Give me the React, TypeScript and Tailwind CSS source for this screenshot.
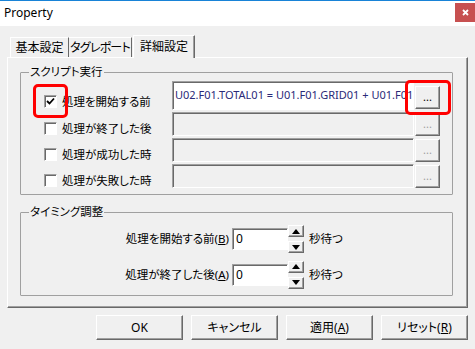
import React from "react";

const raised =
  "border border-t-white border-l-white border-r-[#696969] border-b-[#696969] shadow-[inset_-1px_-1px_0_#a0a0a0]";
const sunken =
  "border border-t-[#a0a0a0] border-l-[#a0a0a0] border-r-white border-b-white shadow-[inset_1px_1px_0_#696969]";

const CheckBox = ({ checked }: { checked?: boolean }) => (
  <div className={`shrink-0 w-[13px] h-[13px] bg-white flex items-center justify-center ${sunken}`}>
    {checked && (
      <svg width="9" height="9" viewBox="0 0 9 9">
        <path d="M1 4 L3.5 6.5 L8 1.5" stroke="#000" strokeWidth="1.8" fill="none" />
      </svg>
    )}
  </div>
);

const DotButton = ({ enabled }: { enabled?: boolean }) => (
  <div
    className={`w-[25px] h-[23px] bg-[#f0f0f0] flex items-center justify-center text-[11px] leading-none pb-[2px] ${raised} ${
      enabled ? "text-black" : "text-[#a0a0a0]"
    }`}
  >
    ...
  </div>
);

const ScriptRow = ({
  label,
  checked,
  value,
  first,
}: {
  label: string;
  checked?: boolean;
  value?: string;
  first?: boolean;
}) => (
  <div className={`flex items-start ${first ? "h-[31px]" : "h-[26px]"}`}>
    <div className={`shrink-0 w-[151px] pl-[23px] flex items-center ${first ? "mt-[14px]" : "mt-[10px]"}`}>
      <CheckBox checked={checked} />
      <span className="ml-[5px] text-[11.5px] leading-[13px] whitespace-nowrap">{label}</span>
    </div>
    <div
      className={`shrink-0 w-[242px] overflow-hidden whitespace-nowrap flex items-center pl-[2px] text-[11px] ${sunken} ${
        first ? "h-[29px] bg-white text-[#2a2a78]" : "h-[24px] bg-[#f0f0f0]"
      } font-['Noto_Sans',sans-serif]`}
    >
      {value}
    </div>
    <div className={`shrink-0 ml-[1px] ${first ? "mt-[5px]" : "mt-[1px]"}`}>
      <DotButton enabled={first} />
    </div>
  </div>
);

const Spinner = () => (
  <div className="w-[16px] h-[28px] flex flex-col justify-between">
    <div className={`h-[12px] bg-[#f0f0f0] flex items-center justify-center ${raised}`}>
      <svg width="8" height="5" viewBox="0 0 8 5">
        <path d="M0 5 L4 0 L8 5 Z" fill="#000" />
      </svg>
    </div>
    <div className={`h-[12px] bg-[#f0f0f0] flex items-center justify-center ${raised}`}>
      <svg width="8" height="5" viewBox="0 0 8 5">
        <path d="M0 0 L8 0 L4 5 Z" fill="#000" />
      </svg>
    </div>
  </div>
);

const TimingRow = ({ label, accel, extra }: { label: string; accel: string; extra: string }) => (
  <div className={`flex items-center ${extra}`}>
    <div className="w-[208px] text-right text-[11.5px] whitespace-nowrap">
      {label}(<span className="underline">{accel}</span>)
    </div>
    <div className={`ml-[3px] w-[56px] h-[22px] bg-white flex items-center pl-[3px] text-[12px] ${sunken}`}>0</div>
    <Spinner />
    <span className="ml-[5px] text-[11.5px]">秒待つ</span>
  </div>
);

const BottomButton = ({ children }: { children: React.ReactNode }) => (
  <div
    className={`w-[87px] h-[25px] bg-[#f0f0f0] flex items-center justify-center text-[12px] ${raised}`}
  >
    {children}
  </div>
);

export default function App() {
  return (
    <div className="relative w-[475px] h-[349px] overflow-hidden bg-[#f0f0f0] text-black font-['Noto_Sans','Noto_Sans_CJK_JP',sans-serif] [font-feature-settings:'palt']">
      {/* title bar */}
      <div className="h-[26px] bg-white border-t border-[#1883d7] flex items-start">
        <span className="ml-[4px] mt-[4px] text-[12px] leading-[16px]">Property</span>
        <div className="ml-auto mt-[2px] w-[20px] h-[19px] bg-[#c75050] flex items-center justify-center">
          <svg width="7" height="7" viewBox="0 0 7 7">
            <path d="M1 1 L6 6 M6 1 L1 6" stroke="#fff" strokeWidth="1.8" />
          </svg>
        </div>
      </div>

      <div className="px-[7px] pt-[9px]">
        {/* tabs */}
        <div className="flex items-end pl-[3px] h-[22px] text-[12px] whitespace-nowrap">
          <div className="w-[59px] h-[20px] flex items-center justify-center border-t border-l border-r border-t-white border-l-white border-r-[#696969]">
            基本設定
          </div>
          <div className="w-[63px] h-[20px] flex items-center justify-center tracking-[-0.8px] border-t border-r border-t-white border-r-[#696969]">
            タグレポート
          </div>
          <div className="relative z-10 ml-[1px] -mb-px w-[62px] h-[23px] bg-[#f0f0f0] flex items-center justify-center pb-[1px] border-t border-l border-r border-t-white border-l-white border-r-[#696969] shadow-[inset_-1px_0_0_#a0a0a0]">
            詳細設定
          </div>
        </div>

        {/* panel */}
        <div className="h-[251px] border border-t-white border-l-white border-r-[#696969] border-b-[#696969] shadow-[inset_-1px_-1px_0_#a0a0a0] pl-[12px]">
          <fieldset className="mt-[6px] w-[433px] border border-[#a0a0a0] rounded-[1px] pb-[4px]">
            <legend className="ml-[8px] px-[1px] text-[11.5px] leading-[16px]">スクリプト実行</legend>
            <div className="mt-[1px]">
              <ScriptRow
                first
                checked
                label="処理を開始する前"
                value="U02.F01.TOTAL01 = U01.F01.GRID01 + U01.F01.GRID02"
              />
              <ScriptRow label="処理が終了した後" />
              <ScriptRow label="処理が成功した時" />
              <ScriptRow label="処理が失敗した時" />
            </div>
          </fieldset>

          <fieldset className="mt-[9px] w-[433px] border border-[#a0a0a0] rounded-[1px] pb-[5px]">
            <legend className="ml-[8px] px-[1px] text-[11.5px] leading-[16px]">タイミング調整</legend>
            <TimingRow label="処理を開始する前" accel="B" extra="mt-[4px] h-[30px]" />
            <TimingRow label="処理が終了した後" accel="A" extra="mt-[5px] h-[31px]" />
          </fieldset>
        </div>

        {/* buttons */}
        <div className="mt-[7px] flex justify-end gap-[8px]">
          <BottomButton>OK</BottomButton>
          <BottomButton>キャンセル</BottomButton>
          <BottomButton>
            適用(<span className="underline">A</span>)
          </BottomButton>
          <BottomButton>
            リセット(<span className="underline">R</span>)
          </BottomButton>
        </div>
      </div>

      {/* red highlight marks */}
      <div className="absolute left-[33px] top-[84px] w-[35px] h-[34px] border-[3px] border-[#ff0000] rounded-[5px]" />
      <div className="absolute left-[405px] top-[80px] w-[46px] h-[35px] border-[3px] border-[#ff0000] rounded-[5px]" />
    </div>
  );
}
